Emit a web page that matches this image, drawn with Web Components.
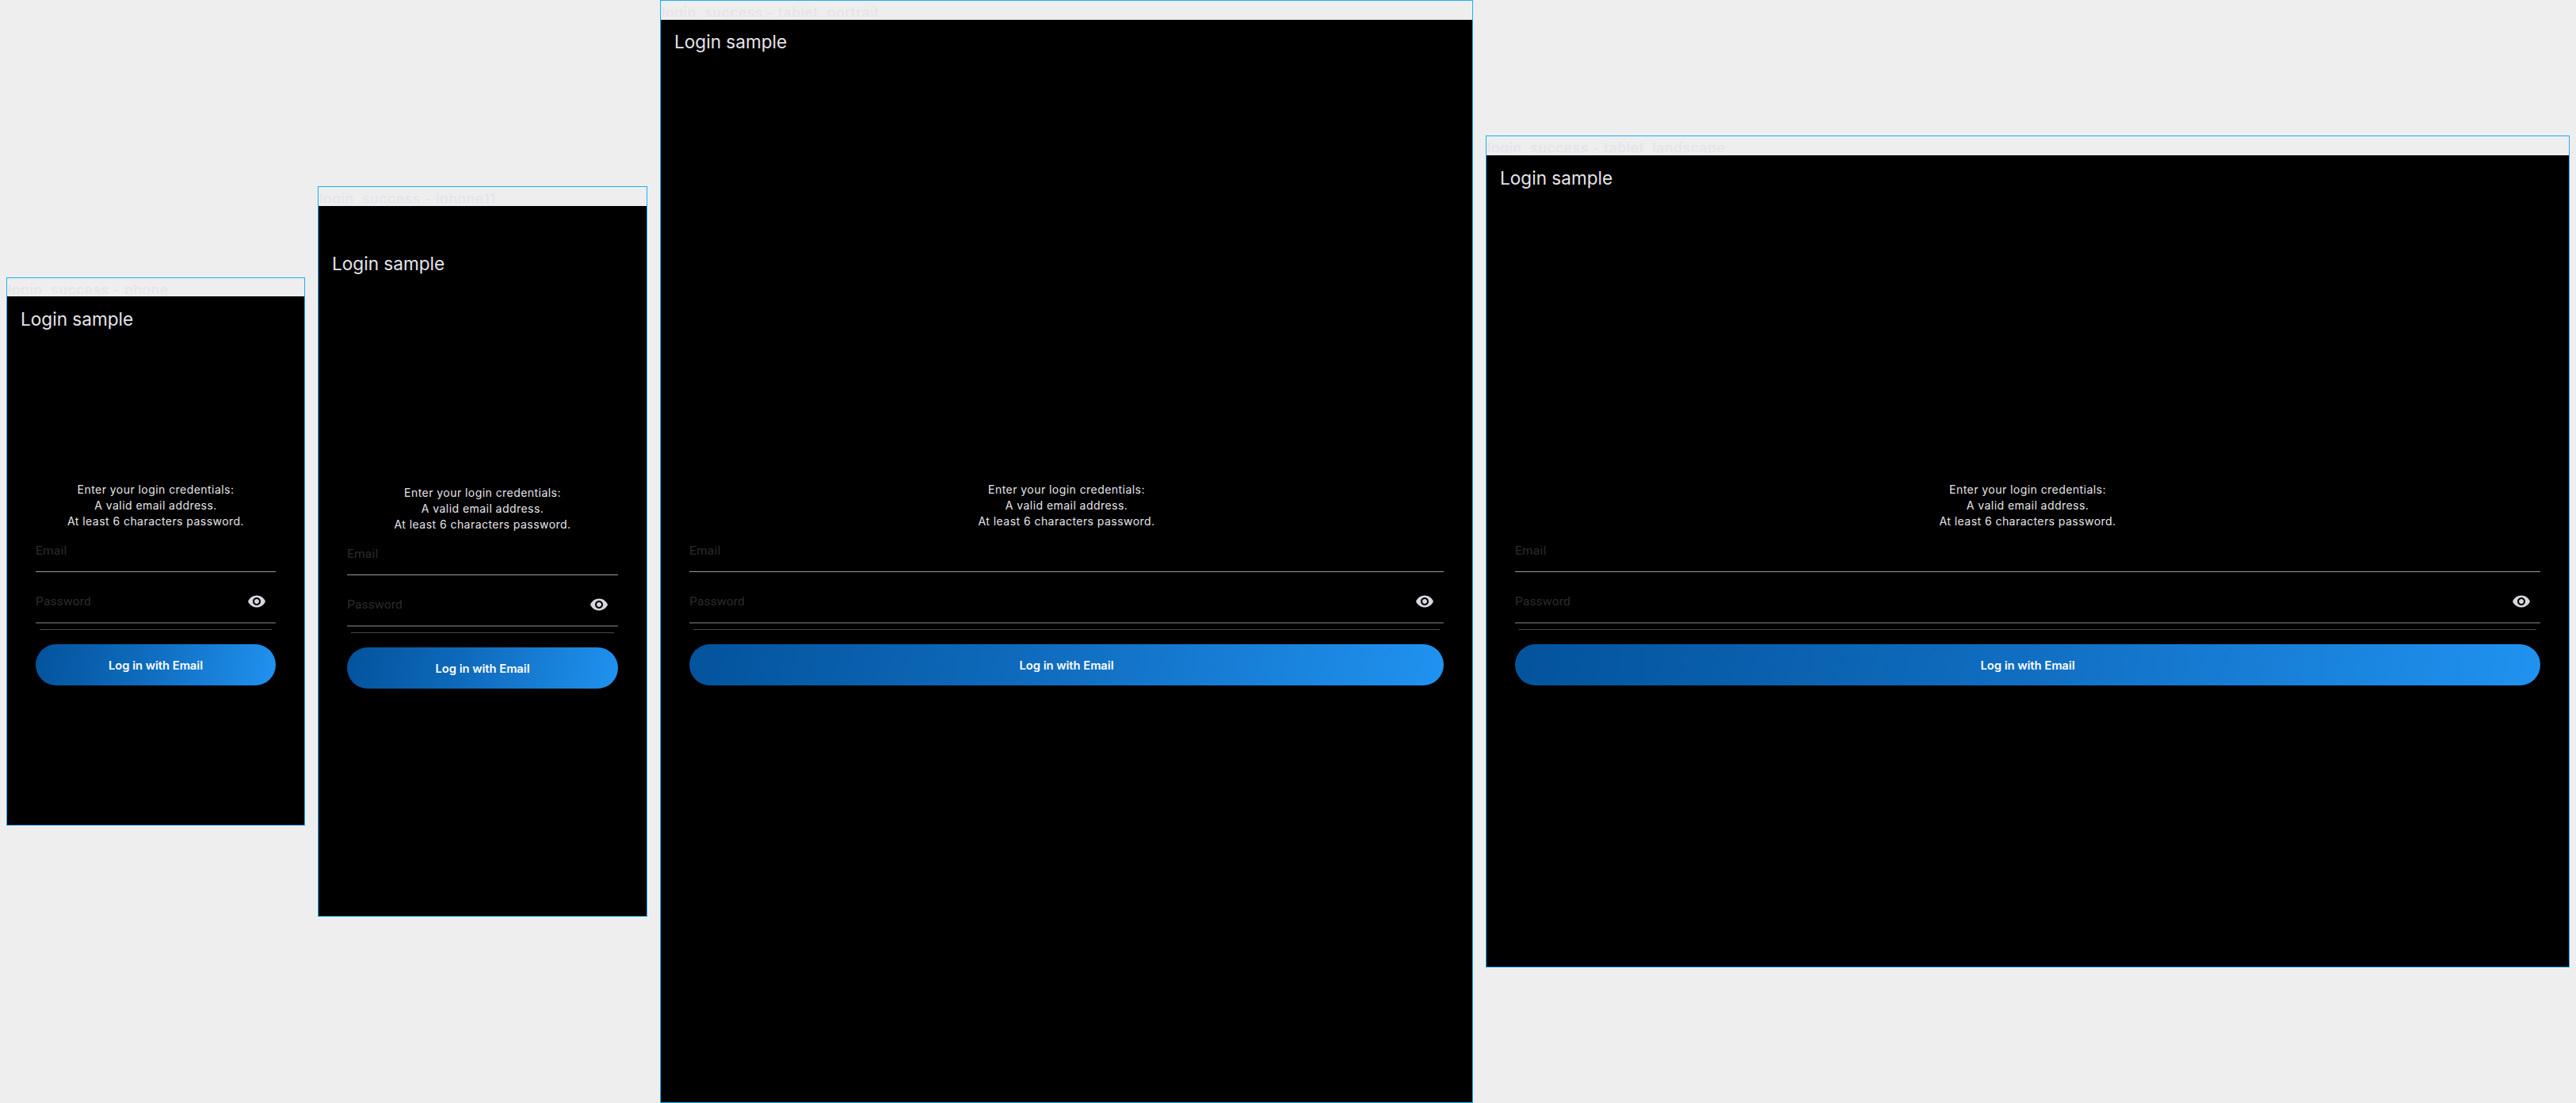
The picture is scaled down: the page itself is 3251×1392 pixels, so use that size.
<!DOCTYPE html>
<html><head><meta charset="utf-8"><title>Login sample</title>
<style>
html,body{margin:0;padding:0;background:#eee;}
body{width:3251px;height:1392px;overflow:hidden;font-family:"Inter","Liberation Sans",sans-serif;}
</style></head><body>
<design-canvas>
<device-frame label="login  success - phone" style="--w:375px;--h:667px;--top:350px;--head:23px;--title-pad:15px;--form-gap:191px">
<login-form></login-form></device-frame>
<device-frame label="login  success - iphone11" style="--w:414px;--h:896px;--top:235px;--head:24px;--title-pad:59px;--form-gap:265px">
<login-form></login-form></device-frame>
<device-frame label="login  success - tablet  portrait" style="--w:1024px;--h:1366px;--top:0px;--head:24px;--title-pad:14px;--form-gap:541px">
<login-form></login-form></device-frame>
<device-frame label="login  success - tablet  landscape" style="--w:1366px;--h:1024px;--top:171px;--head:24px;--title-pad:15px;--form-gap:369px">
<login-form></login-form></device-frame>
</design-canvas>
<script>
customElements.define('design-canvas',class extends HTMLElement{constructor(){super();this.attachShadow({mode:'open'}).innerHTML=`<style>:host{display:flex;align-items:flex-start;gap:16px;padding-left:8px;box-sizing:border-box;width:3251px;height:1392px;background:#eee}</style><slot></slot>`;}});
customElements.define('device-frame',class extends HTMLElement{constructor(){super();this.attachShadow({mode:'open'}).innerHTML=`<style>
:host{display:flex;flex-direction:column;flex:none;margin-top:var(--top);width:var(--w);border:1px solid #1cb0f6;background:#eee}
.label{height:var(--head);box-sizing:border-box;overflow:hidden;flex:none}
.clip{height:20px;overflow:hidden;padding-left:1px;font:500 17.5px/30px "Inter","Liberation Sans",sans-serif;color:#e7e3eb;white-space:pre;letter-spacing:.6px}
.screen{height:var(--h);background:#000;display:flex;flex-direction:column;flex:none}
h1{margin:0;padding:var(--title-pad) 0 0 17px;font:400 22.6px/28px "Inter","Liberation Sans",sans-serif;color:#e6e3ea;}
.body{padding:var(--form-gap) 36px 0}
</style><div class="label"><div class="clip"></div></div><div class="screen"><h1>Login sample</h1><div class="body"><slot></slot></div></div>`;this.shadowRoot.querySelector('.clip').textContent=this.getAttribute('label');}});
customElements.define('eye-icon',class extends HTMLElement{constructor(){super();this.attachShadow({mode:'open'}).innerHTML=`<style>:host{display:block;width:24px;height:24px;margin-bottom:-2px;color:#d8d6dc}svg{display:block}</style><svg width="24" height="24" viewBox="0 0 24 24" fill="currentColor"><path d="M12 4.5C7 4.5 2.73 7.61 1 12c1.73 4.39 6 7.5 11 7.5s9.27-3.11 11-7.5c-1.73-4.39-6-7.5-11-7.5zM12 17c-2.76 0-5-2.24-5-5s2.24-5 5-5 5 2.24 5 5-2.24 5-5 5zm0-8c-1.66 0-3 1.34-3 3s1.34 3 3 3 3-1.34 3-3-1.34-3-3-3z"/></svg>`;}});
customElements.define('text-field',class extends HTMLElement{constructor(){super();this.attachShadow({mode:'open'}).innerHTML=`<style>
:host{display:flex;align-items:flex-end;justify-content:space-between;box-sizing:border-box;height:var(--fh,64px);padding:0 12px 16px 0;font:400 15.5px/20px Roboto,sans-serif;color:#2c2c2c;letter-spacing:.2px;border-bottom:var(--bw,1px) solid var(--bc,#9a9a9a)}
</style><span><slot></slot></span><slot name="end"></slot>`;}});
customElements.define('login-form',class extends HTMLElement{constructor(){super();this.attachShadow({mode:'open'}).innerHTML=`<style>
:host{display:block}
.msg{margin:0;text-align:center;font:400 14px/20px "Inter","Liberation Sans",sans-serif;color:#e6e4e9;letter-spacing:.45px}
.f1{--fh:54px}
.f2{--fh:65px;--bw:2px;--bc:#47464b}
.rule{height:1px;background:#48474c;margin:7px 5px 0}
button{display:block;width:100%;height:52px;margin:18px 0 0;border:0;border-radius:26px;background:linear-gradient(100deg,#03539c 0%,#0f6bbd 45%,#2092f0 100%);color:#fff;font:600 14.7px/54px "Inter","Liberation Sans",sans-serif;padding:0}
</style>
<p class="msg">Enter your login credentials:<br>A valid email address.<br>At least 6 characters password.</p>
<text-field class="f1">Email</text-field>
<text-field class="f2">Password<eye-icon slot="end"></eye-icon></text-field>
<div class="rule"></div>
<button type="button">Log in with Email</button>`;}});
</script>
</body></html>
